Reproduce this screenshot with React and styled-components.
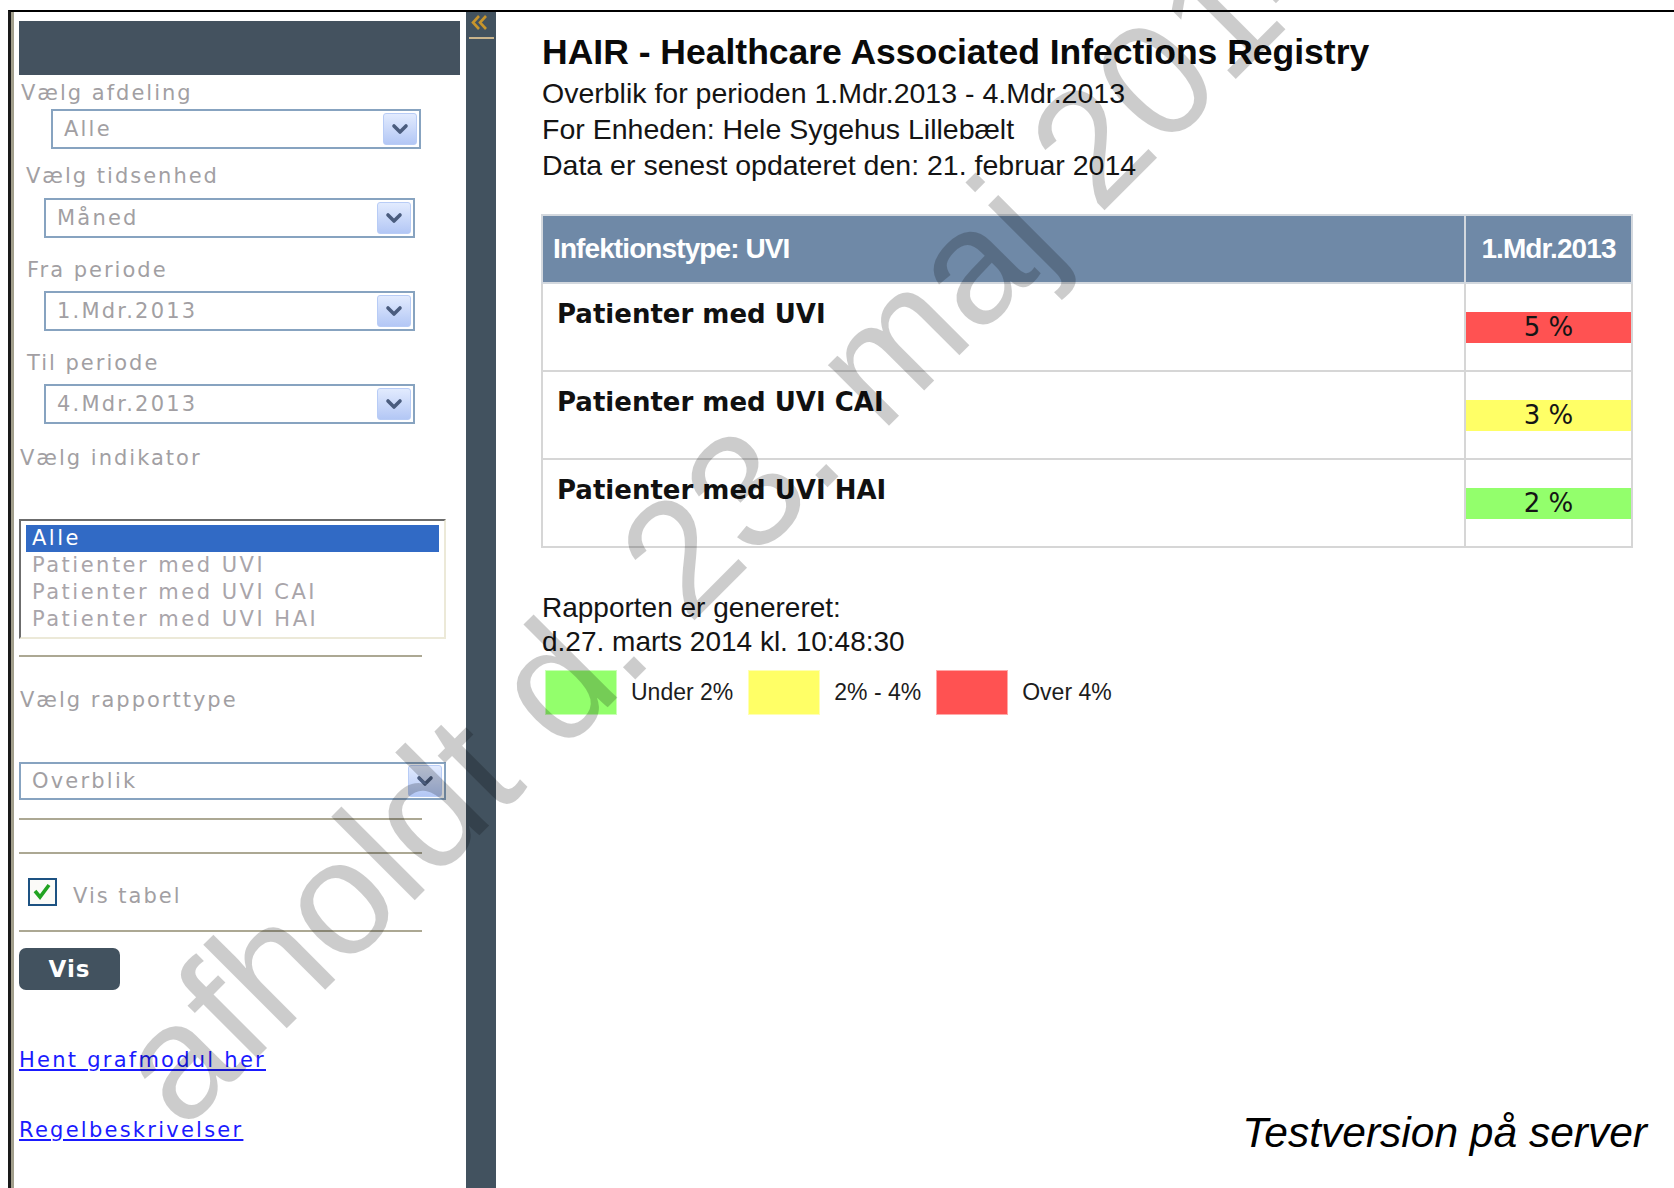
import React from 'react';
import styled, { createGlobalStyle } from 'styled-components';

const GlobalStyle = createGlobalStyle`
    html, body {
        margin: 0;
        padding: 0;
        background: #fff;
        overflow: hidden;
    }
    body {
        font-family: "Liberation Sans", Arial, sans-serif;
        color: #111;
    }
`

const verdana = `"DejaVu Sans", Verdana, sans-serif`;
const arial = `"Liberation Sans", Arial, sans-serif`;

const Page = styled.div`
    position: relative;
    box-sizing: border-box;
    height: 100vh;
    padding: 10px 0 0 8px;
`

const Frame = styled.div`
    box-sizing: border-box;
    display: flex;
    height: 100%;
    border-top: 2px solid #000;
    border-left: 3px solid #1a1a1a;
`

/* ---------- left filter panel ---------- */

const Sidebar = styled.aside`
    box-sizing: border-box;
    width: 455px;
    flex-shrink: 0;
    display: flex;
    flex-direction: column;
    align-items: flex-start;
    padding-left: 5px;
    border-left: 3px solid #a29f8c;
`

const PanelHeader = styled.div`
    width: 441px;
    height: 54px;
    margin-top: 9px;
    background: #44525f;
`

const FieldLabel = styled.div`
    margin: ${p => p.$mt}px 0 0 ${p => p.$ml || 0}px;
    font: 21px/24px ${verdana};
    letter-spacing: 2px;
    color: #a29fa3;
`

const SelectBox = styled.div`
    box-sizing: border-box;
    display: flex;
    align-items: center;
    justify-content: space-between;
    width: ${p => p.$w}px;
    height: ${p => p.$h || 40}px;
    margin: ${p => p.$mt}px 0 0 ${p => p.$ml || 0}px;
    padding: 0 2px 0 11px;
    border: 2px solid #87a3c0;
    background: #fff;
    font: 21px/24px ${verdana};
    letter-spacing: 2.2px;
    color: #a29fa3;
`

const DropButton = styled.div`
    box-sizing: border-box;
    display: flex;
    align-items: center;
    justify-content: center;
    width: 34px;
    height: ${p => p.$h || 32}px;
    border: 1px solid #b8ccf6;
    border-radius: 3px;
    background: linear-gradient(#e2ebfe, #b3c7f5);
`

const ListBox = styled.div`
    box-sizing: border-box;
    width: 427px;
    height: 120px;
    margin-top: 49px;
    padding: 4px 5px;
    border: 2px solid;
    border-color: #6c6c6c #ece9d8 #ece9d8 #6c6c6c;
    background: #fff;
`

const ListItem = styled.div`
    height: 27px;
    padding-left: 6px;
    font: 21px/27px ${verdana};
    letter-spacing: 2.5px;
    color: ${p => (p.$selected ? '#fff' : '#a9a5aa')};
    background: ${p => (p.$selected ? '#316ac5' : 'transparent')};
`

const Rule = styled.div`
    width: 403px;
    height: 2px;
    margin-top: ${p => p.$mt}px;
    background: #aca893;
`

const CheckRow = styled.label`
    display: flex;
    align-items: flex-start;
    gap: 16px;
    height: 28px;
    margin: 24px 0 0 9px;
    font: 21px/28px ${verdana};
    letter-spacing: 2px;
    color: #a29fa3;
`

const CheckText = styled.span`
    margin-top: 4px;
`

const ShowButton = styled.button`
    width: 101px;
    height: 42px;
    margin-top: 16px;
    padding: 0;
    border: 0;
    border-radius: 7px;
    background: #42525f;
    color: #fff;
    font: bold 23px/42px ${verdana};
    letter-spacing: 1px;
`

const PanelLink = styled.a`
    margin-top: ${p => p.$mt}px;
    font: 21px/24px ${verdana};
    letter-spacing: 2.25px;
    color: #1a1aff;
    text-decoration: underline;
`

/* ---------- collapse strip ---------- */

const CollapseBar = styled.div`
    width: 30px;
    flex-shrink: 0;
    display: flex;
    flex-direction: column;
    align-items: center;
    background: #42525f;
`

const CollapseIcon = styled.svg`
    margin: 2px 0 0 -2px;
`

const CollapseLine = styled.div`
    width: 25px;
    height: 2px;
    margin-top: 6px;
    background: #c9b48c;
`

/* ---------- report area ---------- */

const Main = styled.main`
    flex: 1;
    display: flex;
    flex-direction: column;
    padding: 20px 27px 31px 46px;
`

const Title = styled.h1`
    margin: 0 0 3px;
    font: bold 35.5px/40px ${arial};
    color: #0a0a0a;
`

const InfoLine = styled.div`
    font: 28.5px/36px ${arial};
    color: #141414;
`

const ReportTable = styled.table`
    width: 1092px;
    margin: 31px 0 0 -1px;
    border-collapse: collapse;
`

const HeadCell = styled.th`
    height: 66px;
    padding: 0 ${p => (p.$center ? 0 : 10)}px;
    border: 2px solid #d3d8de;
    background: #6f89a7;
    color: #fff;
    font: bold 28px ${arial};
    letter-spacing: -0.9px;
    text-align: ${p => (p.$center ? 'center' : 'left')};
    white-space: nowrap;
`

const NameCell = styled.td`
    height: 88px;
    box-sizing: border-box;
    padding: 15px 14px 0;
    vertical-align: top;
    border: 2px solid #d6d6d6;
    font: bold 26px/30px ${verdana};
    color: #111;
`

const ValueCell = styled.td`
    width: 165px;
    padding: 0;
    vertical-align: middle;
    border: 2px solid #d6d6d6;
`

const ValueBar = styled.div`
    height: 31px;
    background: ${p => p.$color};
    font: 26px/31px ${verdana};
    color: #151515;
    text-align: center;
`

const Generated = styled.div`
    margin-top: 43px;
    font: 28px/34px ${arial};
    color: #141414;
`

const Legend = styled.div`
    display: flex;
    align-items: center;
    margin: 11px 0 0 3px;
`

const Swatch = styled.div`
    box-sizing: border-box;
    width: 72px;
    height: 45px;
    margin-right: 14px;
    background: ${p => p.$color};
    border: 1px solid rgba(255, 255, 255, 0.5);
`

const LegendText = styled.span`
    margin-right: 15px;
    font: 23px ${arial};
    color: #1c1c1c;
`

const Footer = styled.div`
    margin-top: auto;
    text-align: right;
    font: italic 42.5px/48px ${arial};
    color: #000;
`

const Watermark = styled.div`
    position: absolute;
    left: 729px;
    top: 506px;
    transform: translate(-50%, -50%) rotate(-45deg);
    font: 163px/1 ${arial};
    color: rgba(0, 0, 0, 0.2);
    white-space: nowrap;
    pointer-events: none;
`

const colors = {
    green: '#93ff6c',
    yellow: '#ffff66',
    red: '#ff5252',
};

const levelColor = (v) => (v > 4 ? colors.red : v > 2 ? colors.yellow : colors.green);

const indicators = ['Alle', 'Patienter med UVI', 'Patienter med UVI CAI', 'Patienter med UVI HAI'];

const rows = [
    { name: 'Patienter med UVI', value: 5 },
    { name: 'Patienter med UVI CAI', value: 3 },
    { name: 'Patienter med UVI HAI', value: 2 },
];

const Chevron = () => (
    <svg width="18" height="12" viewBox="0 0 18 12">
        <path d="M3 3 L9 9 L15 3" fill="none" stroke="#4a5c7e" strokeWidth="3.6" strokeLinecap="round" strokeLinejoin="round" />
    </svg>
);

const Select = ({ value, w, h, mt, ml }) => (
    <SelectBox $w={w} $h={h} $mt={mt} $ml={ml}>
        <span>{value}</span>
        <DropButton $h={h ? h - 6 : 32}>
            <Chevron />
        </DropButton>
    </SelectBox>
);

const CheckIcon = () => (
    <svg width="29" height="28" viewBox="0 0 29 28">
        <rect x="1" y="1" width="27" height="26" fill="#fbfbf8" stroke="#1d5282" strokeWidth="2" />
        <path d="M7 13 L12 19 L21 7" fill="none" stroke="#21a321" strokeWidth="3.6" />
    </svg>
);

const App = () => {
    return (
        <Page>
            <GlobalStyle />
            <Frame>
                <Sidebar>
                    <PanelHeader />
                    <FieldLabel $mt={6} $ml={2}>Vælg afdeling</FieldLabel>
                    <Select value="Alle" w={370} mt={4} ml={32} />
                    <FieldLabel $mt={15} $ml={7}>Vælg tidsenhed</FieldLabel>
                    <Select value="Måned" w={371} mt={10} ml={25} />
                    <FieldLabel $mt={20} $ml={8}>Fra periode</FieldLabel>
                    <Select value="1.Mdr.2013" w={371} mt={9} ml={25} />
                    <FieldLabel $mt={20} $ml={8}>Til periode</FieldLabel>
                    <Select value="4.Mdr.2013" w={371} mt={9} ml={25} />
                    <FieldLabel $mt={22} $ml={1}>Vælg indikator</FieldLabel>
                    <ListBox>
                        {indicators.map((item, i) => (
                            <ListItem key={item} $selected={i === 0}>{item}</ListItem>
                        ))}
                    </ListBox>
                    <Rule $mt={16} />
                    <FieldLabel $mt={31} $ml={1}>Vælg rapporttype</FieldLabel>
                    <Select value="Overblik" w={427} h={38} mt={50} />
                    <Rule $mt={18} />
                    <Rule $mt={32} />
                    <CheckRow>
                        <CheckIcon />
                        <CheckText>Vis tabel</CheckText>
                    </CheckRow>
                    <Rule $mt={24} />
                    <ShowButton>Vis</ShowButton>
                    <PanelLink href="#" $mt={58}>Hent grafmodul her</PanelLink>
                    <PanelLink href="#" $mt={46}>Regelbeskrivelser</PanelLink>
                </Sidebar>

                <CollapseBar>
                    <CollapseIcon width="20" height="17" viewBox="0 0 20 17">
                        <path d="M9 2 L3 8.5 L9 15 M16 2 L10 8.5 L16 15" fill="none" stroke="#c8952c" strokeWidth="2.6" />
                    </CollapseIcon>
                    <CollapseLine />
                </CollapseBar>

                <Main>
                    <Title>HAIR - Healthcare Associated Infections Registry</Title>
                    <InfoLine>Overblik for perioden 1.Mdr.2013 - 4.Mdr.2013</InfoLine>
                    <InfoLine>For Enheden: Hele Sygehus Lillebælt</InfoLine>
                    <InfoLine>Data er senest opdateret den: 21. februar 2014</InfoLine>

                    <ReportTable>
                        <thead>
                            <tr>
                                <HeadCell>Infektionstype: UVI</HeadCell>
                                <HeadCell $center>1.Mdr.2013</HeadCell>
                            </tr>
                        </thead>
                        <tbody>
                            {rows.map((row) => (
                                <tr key={row.name}>
                                    <NameCell>{row.name}</NameCell>
                                    <ValueCell>
                                        <ValueBar $color={levelColor(row.value)}>{row.value} %</ValueBar>
                                    </ValueCell>
                                </tr>
                            ))}
                        </tbody>
                    </ReportTable>

                    <Generated>
                        Rapporten er genereret:
                        <br />
                        d.27. marts 2014 kl. 10:48:30
                    </Generated>

                    <Legend>
                        <Swatch $color={colors.green} />
                        <LegendText>Under 2%</LegendText>
                        <Swatch $color={colors.yellow} />
                        <LegendText>2% - 4%</LegendText>
                        <Swatch $color={colors.red} />
                        <LegendText>Over 4%</LegendText>
                    </Legend>

                    <Footer>Testversion på server</Footer>
                </Main>
            </Frame>
            <Watermark>afholdt d. 23. maj 2014</Watermark>
        </Page>
    );
}

export default App;
